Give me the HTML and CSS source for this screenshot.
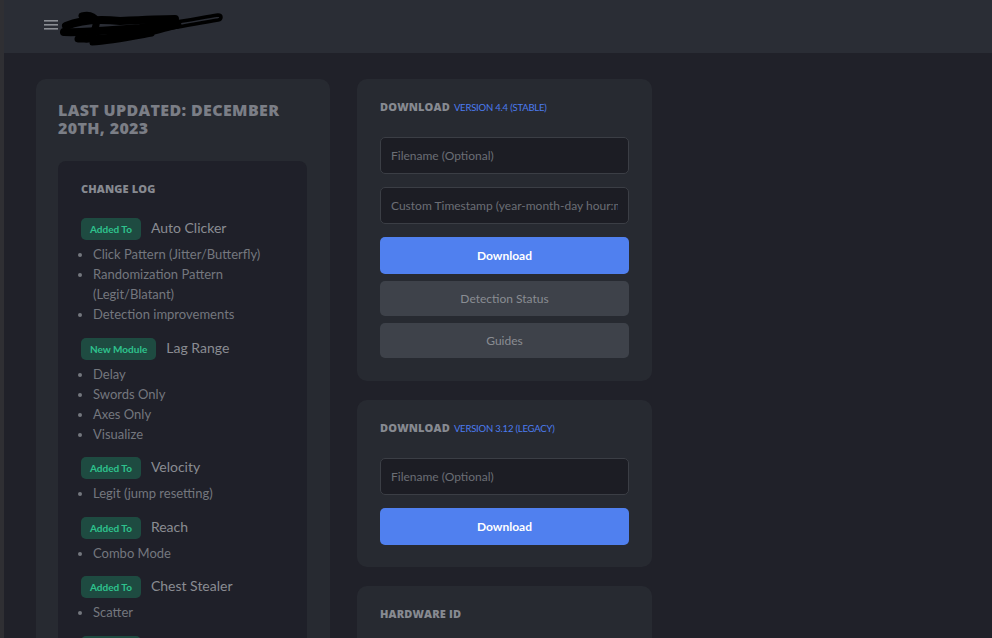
FILE: index.html
```html
<!DOCTYPE html>
<html lang="en">
<head>
  <meta charset="UTF-8" />
  <title>Dashboard</title>
  <link rel="stylesheet" href="styles.css">
</head>
<body>
  <header class="topbar">
    <svg class="menu-icon" width="14" height="10" viewBox="0 0 14 10">
      <rect x="0" y="0" width="14" height="1.6" fill="#8a8d93" />
      <rect x="0" y="4" width="14" height="1.6" fill="#8a8d93" />
      <rect x="0" y="8" width="14" height="1.6" fill="#8a8d93" />
    </svg>
    <svg class="redacted" width="165" height="36" viewBox="0 0 165 36">
      <path d="M6 15 C 20 9, 40 8, 60 10 C 80 9, 100 8, 115 8" stroke="#000" stroke-width="8" fill="none" stroke-linecap="round" />
      <path d="M4 21 C 25 22, 50 19, 80 17 C 95 15, 105 14, 115 12" stroke="#000" stroke-width="8" fill="none" stroke-linecap="round" />
      <path d="M18 28 C 40 29, 60 25, 90 21 C 100 19, 108 16, 118 14" stroke="#000" stroke-width="7" fill="none" stroke-linecap="round" />
      <path d="M32 32 C 50 31, 70 27, 92 23" stroke="#000" stroke-width="5" fill="none" stroke-linecap="round" />
      <path d="M22 5 C 30 3, 38 6, 36 14 C 34 24, 28 30, 24 27" stroke="#000" stroke-width="7" fill="none" stroke-linecap="round" />
      <path d="M110 12 C 125 10, 140 7, 158 4 C 162 4, 162 8, 158 9 C 140 12, 125 15, 112 17" stroke="#000" stroke-width="3.5" fill="none" stroke-linecap="round" />
    </svg>
  </header>

  <main class="content">
    <section class="card card-log">
      <h2 class="updated">Last updated: December 20th, 2023</h2>
      <div class="changelog">
        <h3 class="card-title">Change Log</h3>

        <div class="entry">
          <div class="entry-head"><span class="badge">Added To</span><span class="entry-name">Auto Clicker</span></div>
          <ul>
            <li>Click Pattern (Jitter/Butterfly)</li>
            <li>Randomization Pattern (Legit/Blatant)</li>
            <li>Detection improvements</li>
          </ul>
        </div>

        <div class="entry">
          <div class="entry-head"><span class="badge">New Module</span><span class="entry-name">Lag Range</span></div>
          <ul>
            <li>Delay</li>
            <li>Swords Only</li>
            <li>Axes Only</li>
            <li>Visualize</li>
          </ul>
        </div>

        <div class="entry">
          <div class="entry-head"><span class="badge">Added To</span><span class="entry-name">Velocity</span></div>
          <ul>
            <li>Legit (jump resetting)</li>
          </ul>
        </div>

        <div class="entry">
          <div class="entry-head"><span class="badge">Added To</span><span class="entry-name">Reach</span></div>
          <ul>
            <li>Combo Mode</li>
          </ul>
        </div>

        <div class="entry">
          <div class="entry-head"><span class="badge">Added To</span><span class="entry-name">Chest Stealer</span></div>
          <ul>
            <li>Scatter</li>
          </ul>
        </div>

        <div class="entry">
          <div class="entry-head"><span class="badge">Added To</span></div>
        </div>
      </div>
    </section>

    <div class="column">
      <section class="card card-main">
        <h3 class="card-title">Download <span class="version">Version 4.4 (Stable)</span></h3>
        <form class="dl-form">
          <input type="text" placeholder="Filename (Optional)" />
          <input type="text" placeholder="Custom Timestamp (year-month-day hour:minute:second)" />
          <button type="button" class="btn btn-primary">Download</button>
          <button type="button" class="btn btn-muted">Detection Status</button>
          <button type="button" class="btn btn-muted">Guides</button>
        </form>
      </section>

      <section class="card">
        <h3 class="card-title">Download <span class="version">Version 3.12 (Legacy)</span></h3>
        <form class="dl-form">
          <input type="text" placeholder="Filename (Optional)" />
          <button type="button" class="btn btn-primary">Download</button>
        </form>
      </section>

      <section class="card">
        <h3 class="card-title">Hardware ID</h3>
        <form class="dl-form">
          <input type="text" placeholder="Hardware ID" />
        </form>
      </section>
    </div>
  </main>
</body>
</html>
```

FILE: styles.css
```css
html, body {
  height: 100%;
}

body {
  margin: 0;
  background: #202129;
  border-left: 4px solid #2f2f33;
  font-family: Lato, "Open Sans", sans-serif;
  color: #8a8c93;
  overflow: hidden;
}

.topbar {
  height: 53px;
  background: #2a2d35;
  display: flex;
  align-items: center;
  padding-left: 40px;
  box-sizing: border-box;
}

.menu-icon {
  margin-top: -3px;
}

.redacted {
  margin-left: 2px;
  margin-top: 4px;
}

.content {
  display: flex;
  align-items: flex-start;
  gap: 27px;
  padding: 26px 32px;
}

.card {
  background: #272a31;
  border-radius: 10px;
  padding: 21px 23px 22px;
  width: 295px;
  box-sizing: border-box;
}

.card-main {
  padding-bottom: 23px;
}

.card-log {
  width: 294px;
  padding: 22px 23px 0 22px;
  min-height: 700px;
}

.column {
  display: flex;
  flex-direction: column;
  gap: 19px;
}

.updated {
  margin: 0 0 24px;
  font-family: "Open Sans", sans-serif;
  font-weight: 800;
  font-size: 16px;
  line-height: 18px;
  letter-spacing: 0.35px;
  text-transform: uppercase;
  color: #7b7e86;
}

.changelog {
  background: #1f2029;
  border-radius: 8px;
  padding: 21px 23px;
  min-height: 600px;
}

.card-title {
  margin: 0;
  font-family: "Open Sans", sans-serif;
  font-weight: 800;
  font-size: 11px;
  line-height: 14px;
  letter-spacing: 0.15px;
  text-transform: uppercase;
  color: #878a91;
}

.changelog .card-title {
  margin-bottom: 22px;
}

.version {
  font-family: Lato, sans-serif;
  font-weight: 400;
  font-size: 9.5px;
  letter-spacing: -0.2px;
  color: #4c7cf0;
  margin-left: 1px;
}

.entry {
  margin-bottom: 13.5px;
}

.entry-head {
  display: flex;
  align-items: center;
  gap: 10px;
  height: 22px;
}

.badge {
  display: inline-block;
  height: 22px;
  line-height: 22px;
  padding: 0 9px;
  border-radius: 5px;
  background: #1e4b41;
  color: #2ec28d;
  font-size: 10px;
  font-weight: 700;
}

.entry-name {
  font-size: 14px;
  color: #8a8c92;
  margin-top: -3px;
}

.entry ul {
  margin: 4px 0 0;
  padding-left: 12px;
}

.entry li {
  font-size: 13px;
  line-height: 20px;
  color: #74777e;
}

.dl-form {
  display: flex;
  flex-direction: column;
  margin-top: 22px;
}

.dl-form input {
  height: 37px;
  padding: 0 10px;
  margin-bottom: 13px;
  background: #1c1d24;
  border: 1px solid #3b3e45;
  border-radius: 5px;
  color: #a0a3a9;
  font-family: Lato, sans-serif;
  font-size: 12px;
  box-sizing: border-box;
}

.dl-form input::placeholder {
  color: #6b6e75;
}

.btn {
  height: 35px;
  border: none;
  border-radius: 5px;
  font-family: Lato, sans-serif;
  font-size: 12px;
  cursor: pointer;
}

.btn + .btn {
  margin-top: 7px;
}

.btn-primary {
  height: 37px;
  background: #5080ef;
  color: #ffffff;
  font-weight: 700;
}

.btn-muted {
  background: #3e424a;
  color: #8a8d93;
}
```
